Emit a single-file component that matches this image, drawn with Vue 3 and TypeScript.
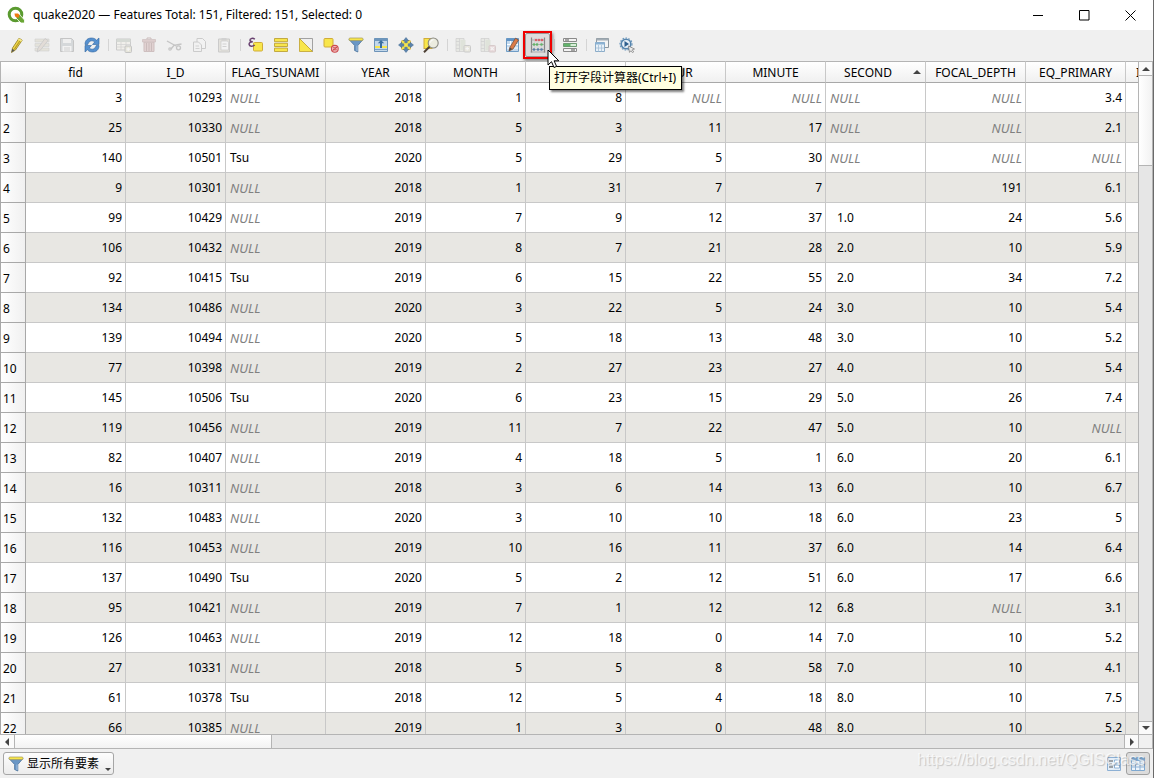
<script setup lang="ts">
interface Tool {
  label: string
  icon: string
  disabled?: boolean
  active?: boolean
}

const pencil =
  '<path d="M2.500 15.500l1-4.500L10 1.200l3.200 2L6.500 13z" fill="#f0d94a" stroke="#8d7a25" stroke-width=".8"/><path d="M5.200 12.500L11.800 2.500" stroke="#b79a26" stroke-width="1.200"/><path d="M2.500 15.500l.8-3.700 2.300 1.500z" fill="#555"/><path d="M10 1.200l3.200 2-1 1.600-3.200-2z" fill="#f6e98e"/>'
const funnel =
  '<path d="M1 2.500h14L9.800 8.500v6.500l-3.200-1.500v-5z" fill="#6a97c6" stroke="#4b739c" stroke-width=".8"/><path d="M9 8.500v5.500" stroke="#a5c3e3"/><rect x="1" y="1" width="14" height="2.600" rx="1" fill="#f8e64b" stroke="#a39a5a" stroke-width=".7"/>'
const column =
  '<path d="M1 1.500h8v13H1z" fill="#d8dccf" stroke="#999" stroke-width=".8"/><path d="M4.500 1.500v13M1 4.500h3.500M1 8h3.500M1 11.500h3.500" stroke="#999" stroke-width=".8"/><rect x="5.500" y="3" width="5" height="10" fill="#c2ccb4"/>'

const groups: Tool[][] = [
  [
    { label: 'Toggle editing', icon: pencil },
    {
      label: 'Multi edit',
      disabled: true,
      icon: '<path d="M1 2h14v3H1zM1 6.500h14v3H1zM1 11h14v3H1z" fill="#cfcbb4" stroke="#999" stroke-width=".6"/><path d="M3 15l1-4 7-9.500 3 2L6.500 13z" fill="#c9b9a9" stroke="#888" stroke-width=".9"/>',
    },
    {
      label: 'Save edits',
      disabled: true,
      icon: '<path d="M1.500 1.500h11l2 2v11h-13z" fill="#a6acb2" stroke="#777"/><path d="M4 2h8v4H4z" fill="#eee"/><path d="M3.500 9h9v5.500h-9z" fill="#f7f7f7"/><path d="M5 11h6M5 13h6" stroke="#999"/>',
    },
    {
      label: 'Reload table',
      icon: '<path d="M1 7.500C1 3 4 1 7.500 1c2.300 0 3.800.8 5 2.200L15 1v6.500H8.500L10.700 5C8.500 3 5 3.300 3.800 7.500z" fill="#5590cf" stroke="#2f659f" stroke-width=".6"/><path d="M15 8.500C15 13 12 15 8.500 15c-2.300 0-3.800-.8-5-2.200L1 15V8.500h6.500L5.300 11c2.200 2 5.700 1.700 6.900-2.500z" fill="#5590cf" stroke="#2f659f" stroke-width=".6"/>',
    },
  ],
  [
    {
      label: 'Add feature',
      disabled: true,
      icon: '<path d="M.5 2h14v11H.5z" fill="#f1efe2" stroke="#888"/><path d="M.5 2h14v3H.5z" fill="#a7b3a6"/><path d="M.5 7.500h14M.5 10h14M5 5v8M10 5v8" stroke="#999" stroke-width=".7"/><rect x="9" y="9" width="6.500" height="6.500" rx="1" fill="#d6d2b4" stroke="#777"/><path d="M12.200 10.500v3.500M10.500 12.200H14" stroke="#fff" stroke-width="1.300"/>',
    },
    {
      label: 'Delete selected features',
      disabled: true,
      icon: '<path d="M3 5h10v9.500H3z" fill="#c89b9b" stroke="#906767"/><path d="M1.500 2.500h13V5h-13z" fill="#bd9292" stroke="#906767" stroke-width=".7"/><path d="M6 2V1h4v1M5.500 6v8M8 6v8M10.500 6v8" stroke="#875d5d" fill="none"/>',
    },
    {
      label: 'Cut',
      disabled: true,
      icon: '<path d="M1 4l9 5M15.500 7L8 8.300 5 12" stroke="#777" stroke-width="1.400" fill="none"/><circle cx="12.500" cy="10.800" r="2" fill="none" stroke="#777" stroke-width="1.300"/><circle cx="4" cy="12" r="1.200" fill="none" stroke="#777" stroke-width="1.200"/>',
    },
    {
      label: 'Copy',
      disabled: true,
      icon: '<path d="M6 1.500h5.500l3 3v7H6z" fill="#f8f8f8" stroke="#888"/><path d="M2.500 5h5l3 3v6.500h-8z" fill="#f4f4f4" stroke="#888"/><path d="M4.500 9h3.500M4.500 11.500h4" stroke="#999"/>',
    },
    {
      label: 'Paste',
      disabled: true,
      icon: '<path d="M2.500 2h11v13h-11z" fill="#cfcaba" stroke="#888"/><path d="M5 4h6.500l1 1.500V13H5z" fill="#fafafa" stroke="#888" stroke-width=".7"/><path d="M5.500 1h5v2.500h-5z" fill="#999"/><path d="M6.500 7h4M6.500 9.500h4" stroke="#999"/>',
    },
  ],
  [
    {
      label: 'Select by expression',
      icon: '<rect x="5.500" y="5.500" width="9" height="8.500" rx="1" fill="#f8e64b" stroke="#d0ac3a"/><path d="M6.800 2.300C5 .6 1.800 1.300 2 3.200c.1 1.200 1.400 1.600 2.800 1.600C2.800 4.800.9 5.600 1.100 7.400c.2 2.100 3.600 2.400 5.600.6" fill="none" stroke="#68406f" stroke-width="1.500"/>',
    },
    {
      label: 'Select all',
      icon: '<path d="M1.500 1.500h13v3.200h-13zM1.500 6.300h13v3.200h-13zM1.500 11.100h13v3.400h-13z" fill="#f8e64b" stroke="#bda337" stroke-width=".9"/>',
    },
    {
      label: 'Invert selection',
      icon: '<path d="M1.500 1.500h13v13z" fill="#efefef" stroke="#999" stroke-width=".9"/><path d="M1.500 1.500v13h13z" fill="#f8e64b" stroke="#c5a93a" stroke-width=".9"/>',
    },
    {
      label: 'Deselect all',
      icon: '<rect x="1" y="1.500" width="9" height="8.500" rx="1" fill="#f8e64b" stroke="#d0ac3a"/><circle cx="11.800" cy="11.800" r="3.400" fill="#f3c3c3" stroke="#cc4b4f" stroke-width="1.100"/><path d="M9.500 13.500l4.600-3.400M9.800 10.800h4M9.800 12.800h4" stroke="#cc4b4f"/>',
    },
    { label: 'Filter', icon: funnel },
    {
      label: 'Move selection to top',
      icon: '<path d="M1.500 1.500h13v13h-13z" fill="#c3d8ea" stroke="#6d93b8"/><path d="M1.500 1.500h13v2.500h-13z" fill="#6d96bd"/><path d="M2 9h12v2H2z" fill="#f8e64b"/><path d="M2 12.500h12" stroke="#7ea3c6"/><path d="M8 3l3.200 3.200H9V11H7V6.200H4.800z" fill="#3a6e9e"/>',
    },
    {
      label: 'Pan to selection',
      icon: '<rect x="3.500" y="3.500" width="9" height="9" rx="1" fill="#f8e64b" stroke="#d0ac3a"/><path d="M8 .5l2.700 3.300H9.200v2H6.800v-2H5.300zM8 15.500l2.700-3.300H9.200v-2H6.800v2H5.300zM.5 8l3.300-2.700v1.500h2v2.400h-2v1.500zM15.500 8l-3.300-2.700v1.500h-2v2.400h2v1.500z" fill="#5b83ad" stroke="#426a93" stroke-width=".5"/>',
    },
    {
      label: 'Zoom to selection',
      icon: '<rect x="1" y="1.500" width="8" height="10" fill="#f8e64b" stroke="#d0ac3a"/><circle cx="10.200" cy="6" r="5" fill="#ececdf" stroke="#8a8a82" stroke-width="1.100"/><path d="M6.500 9.800L1 15.200" stroke="#4d3f33" stroke-width="2"/><path d="M7.500 5.500a3 3 0 0 1 3-2.800" stroke="#fff" fill="none"/>',
    },
  ],
  [
    {
      label: 'New field',
      disabled: true,
      icon: column + '<rect x="9" y="8.500" width="6.500" height="6.500" rx="1" fill="#d8d5bb" stroke="#888"/><path d="M12.200 10v3.500M10.500 11.700H14" stroke="#fff" stroke-width="1.200"/>',
    },
    {
      label: 'Delete field',
      disabled: true,
      icon: column + '<rect x="9" y="8.500" width="6.500" height="6.500" rx="1" fill="#d9b1b5" stroke="#a88"/><path d="M10.700 10.200l3 3M13.700 10.200l-3 3" stroke="#fff" stroke-width="1.200"/>',
    },
    {
      label: 'Organize columns',
      icon: '<path d="M1.500 1.500h12v13h-12z" fill="#c5daee" stroke="#6f9cc5"/><path d="M1.500 1.500h12v2.500h-12z" fill="#6294c5"/><path d="M2 7.500h11M2 11h11M5.500 4v10" stroke="#fff"/><path d="M4 14l1-4 5.500-8.800 3 1.800L8 12z" fill="#dc7b48" stroke="#73503d" stroke-width=".8"/><path d="M4 14l.9-3.500L7.300 12z" fill="#4c4c4c"/>',
    },
    {
      label: '打开字段计算器',
      active: true,
      icon: '<path d="M1.500.5v15M14.500.5v15" stroke="#888" stroke-width="1.200"/><path d="M1.500 3h13M1.500 7.500h13M1.500 12.500h13M.5 15h15" stroke="#999" stroke-width=".7"/><path d="M4.500 1v13M8 1v13M11.500 1v13" stroke="#ccc" stroke-width=".6"/><g fill="#d9616b"><circle cx="6" cy="3" r="1.300"/><circle cx="9" cy="3" r="1.300"/><circle cx="12" cy="3" r="1.300"/></g><g fill="#64b36a"><circle cx="4" cy="7.500" r="1.300"/><circle cx="7" cy="7.500" r="1.300"/><circle cx="11.500" cy="7.500" r="1.300"/></g><g fill="#597ea8"><circle cx="4" cy="12.500" r="1.300"/><circle cx="8" cy="12.500" r="1.300"/><circle cx="11.500" cy="12.500" r="1.300"/></g>',
    },
  ],
  [
    {
      label: 'Conditional formatting',
      icon: '<path d="M1.500 1.500h13v3h-13z" fill="#f4f4f4" stroke="#8a8a8a"/><path d="M1.500 6.500h13v3h-13z" fill="#62b36b" stroke="#6d9a72"/><path d="M1.500 11.500h13v3h-13z" fill="#f4f4f4" stroke="#8a8a8a"/><path d="M8.500 7h5.500v2H8.500z" fill="#d8efd9"/><path d="M3 3h4M9 13h4" stroke="#555"/>',
    },
  ],
  [
    {
      label: 'Dock attribute table',
      icon: '<path d="M2.500 1.500h12v9h-12z" fill="#f4f4f4" stroke="#8c979f"/><path d="M2.500 1.500h12v2h-12z" fill="#a3adb5"/><path d="M1.500 5.500h9v9h-9z" fill="#e8f1f8" stroke="#8bacc8"/><path d="M1.500 5.500h9v2h-9z" fill="#8bb2d4"/><path d="M2 11h8M4.500 8v6.500M7.500 8v6.500" stroke="#a5bfd5" stroke-width=".8"/>',
    },
    {
      label: 'Actions',
      icon: '<circle cx="7" cy="7" r="4.800" fill="#e4eef7" stroke="#5685ae" stroke-width="1.600"/><circle cx="7" cy="7" r="6" fill="none" stroke="#6d98bd" stroke-width="1.200" stroke-dasharray="1.600 1.400"/><path d="M5.500 4l4.500 3-4.500 3z" fill="#2e5e8d"/><path d="M9.500 9l6 3-2.300.8 1.500 2-1.200.9-1.500-2-1.500 1.700z" fill="#eee" stroke="#777" stroke-width=".7"/>',
    },
  ],
]

const columns = ['fid', 'I_D', 'FLAG_TSUNAMI', 'YEAR', 'MONTH', 'DAY', 'HOUR', 'MINUTE', 'SECOND', 'FOCAL_DEPTH', 'EQ_PRIMARY', 'I']

const source = `3|10293|NULL|2018|1|8|NULL|NULL|NULL|NULL|3.4
25|10330|NULL|2018|5|3|11|17|NULL|NULL|2.1
140|10501|Tsu|2020|5|29|5|30|NULL|NULL|NULL
9|10301|NULL|2018|1|31|7|7||191|6.1
99|10429|NULL|2019|7|9|12|37|1.0|24|5.6
106|10432|NULL|2019|8|7|21|28|2.0|10|5.9
92|10415|Tsu|2019|6|15|22|55|2.0|34|7.2
134|10486|NULL|2020|3|22|5|24|3.0|10|5.4
139|10494|NULL|2020|5|18|13|48|3.0|10|5.2
77|10398|NULL|2019|2|27|23|27|4.0|10|5.4
145|10506|Tsu|2020|6|23|15|29|5.0|26|7.4
119|10456|NULL|2019|11|7|22|47|5.0|10|NULL
82|10407|NULL|2019|4|18|5|1|6.0|20|6.1
16|10311|NULL|2018|3|6|14|13|6.0|10|6.7
132|10483|NULL|2020|3|10|10|18|6.0|23|5
116|10453|NULL|2019|10|16|11|37|6.0|14|6.4
137|10490|Tsu|2020|5|2|12|51|6.0|17|6.6
95|10421|NULL|2019|7|1|12|12|6.8|NULL|3.1
126|10463|NULL|2019|12|18|0|14|7.0|10|5.2
27|10331|NULL|2018|5|5|8|58|7.0|10|4.1
61|10378|Tsu|2018|12|5|4|18|8.0|10|7.5
66|10385|NULL|2019|1|3|0|48|8.0|10|5.2`
const rows: string[][] = source.split('\n').map((line) => [...line.split('|'), ''])

function cellClass(value: string, index: number) {
  return {
    empty: value === 'NULL',
    left: index === 2 || index === 8,
    padded: index === 8 && value !== 'NULL',
  }
}
</script>

<template>
  <div class="window">
    <header class="titlebar">
      <svg class="logo" viewBox="0 0 18 18" aria-hidden="true">
        <circle cx="8.500" cy="8.500" r="6.300" fill="none" stroke="#5a9a2f" stroke-width="3" />
        <path d="M9 8.500h3.500l5 5.500v3h-3.500L9 12z" fill="#6aa635" stroke="#fff" stroke-width=".8" />
        <path d="M7.500 7.500h3.500l1.500 1.500-1 3-3.500-1.500z" fill="#ee7913" />
      </svg>
      <h1>quake2020 — Features Total: 151, Filtered: 151, Selected: 0</h1>
      <div class="controls">
        <button aria-label="Minimize"><svg viewBox="0 0 11 11"><path d="M0 5.500h10" /></svg></button>
        <button aria-label="Maximize"><svg viewBox="0 0 11 11"><path d="M.5.5h9.500v9.500H.5z" /></svg></button>
        <button aria-label="Close"><svg viewBox="0 0 11 11"><path d="M.5.5l10 10M10.500.5l-10 10" /></svg></button>
      </div>
    </header>

    <nav class="toolbar">
      <div v-for="(group, g) in groups" :key="g" class="group">
        <div v-for="tool in group" :key="tool.label" class="slot">
          <button :aria-label="tool.label" :disabled="tool.disabled" :class="{ active: tool.active }">
            <svg viewBox="0 0 16 16" v-html="tool.icon"></svg>
          </button>
          <template v-if="tool.active">
            <span class="highlight"></span>
            <div class="tooltip" role="tooltip">打开字段计算器(Ctrl+I)</div>
            <svg class="cursor" viewBox="0 0 13 20" aria-hidden="true">
              <path d="M1 1v15l3.500-3.300 2.500 5.800 2.600-1.100-2.500-5.600h4.700z" fill="#fff" stroke="#000" />
            </svg>
          </template>
        </div>
      </div>
    </nav>

    <main class="grid">
      <div class="viewport">
        <table>
          <colgroup>
            <col class="index" />
            <col v-for="name in columns" :key="name" class="field" />
          </colgroup>
          <thead>
            <tr>
              <td class="corner"></td>
              <th v-for="name in columns" :key="name" scope="col" :class="{ sorted: name === 'SECOND' }">{{ name }}</th>
            </tr>
          </thead>
          <tbody>
            <tr v-for="(row, r) in rows" :key="r">
              <th scope="row">{{ r + 1 }}</th>
              <td v-for="(value, c) in row" :key="c" :class="cellClass(value, c)">{{ value }}</td>
            </tr>
          </tbody>
        </table>
      </div>
      <div class="vscroll">
        <button class="up" aria-label="Scroll up"></button>
        <div class="thumb"></div>
        <div class="track"></div>
        <button class="down" aria-label="Scroll down"></button>
      </div>
      <div class="hscroll">
        <button class="prev" aria-label="Scroll left"></button>
        <div class="thumb"></div>
        <div class="track"></div>
        <button class="next" aria-label="Scroll right"></button>
      </div>
      <div class="resize"></div>
    </main>

    <footer class="statusbar">
      <button class="filter">
        <svg viewBox="0 0 16 16" aria-hidden="true" v-html="funnel"></svg>
        <span>显示所有要素</span>
        <i class="caret"></i>
      </button>
      <div class="views">
        <button aria-label="Form view">
          <svg viewBox="0 0 16 16">
            <path d="M1.500 1.500h13v13h-13z" fill="#e4eef8" stroke="#8db0d4" />
            <path d="M3 5h4M3 8h3M3 11h4" stroke="#555" stroke-width="1.200" />
            <path d="M8.500 4h5v3h-5zM8.500 9h5v3h-5z" fill="#fff" stroke="#8db0d4" />
          </svg>
        </button>
        <button class="pressed" aria-label="Table view">
          <svg viewBox="0 0 16 16">
            <path d="M1.500 1.500h13v13h-13z" fill="#edf4fb" stroke="#7ea8d0" />
            <path d="M1.500 1.500h13v3.500h-13z" fill="#7ea8d0" />
            <path d="M1.500 8h13M1.500 11h13M5.500 5v9M10 5v9" stroke="#8db0d4" />
          </svg>
        </button>
      </div>
      <span class="watermark">https://blog.csdn.net/QGISClass</span>
    </footer>
  </div>
</template>

<style>
html,
body {
  background: #f0f0f0;
}
</style>

<style scoped>
.window {
  display: flex;
  flex-direction: column;
  height: 100vh;
  box-sizing: border-box;
  border-right: 1px solid #6a6a6a;
  overflow: hidden;
  background: #f0f0f0;
  color: #000;
  font: 12px/16px "Noto Sans", "Noto Sans CJK SC", sans-serif;
}
button {
  box-sizing: border-box;
  margin: 0;
  padding: 0;
  border: 0;
  background: none;
  font: inherit;
  color: inherit;
}
svg {
  display: block;
}
.titlebar {
  display: flex;
  align-items: center;
  flex: none;
  height: 30px;
  padding-left: 7px;
  background: #fff;
}
.logo {
  width: 18px;
  height: 18px;
}
h1 {
  flex: 1;
  margin: 0 0 0 8px;
  font-size: 12px;
  font-weight: 400;
  white-space: nowrap;
}
.controls {
  display: flex;
}
.controls button {
  display: grid;
  place-items: center;
  width: 46px;
  height: 29px;
}
.controls svg {
  width: 11px;
  height: 11px;
  fill: none;
  stroke: #000;
}
.toolbar {
  display: flex;
  align-items: flex-start;
  flex: none;
  box-sizing: border-box;
  height: 31px;
  padding: 3px 0 0 4px;
}
.group {
  display: flex;
}
.group + .group::before {
  content: "";
  width: 1px;
  height: 12px;
  margin: 6px 2px 6px 4px;
  background: #d4d4d4;
}
.slot {
  position: relative;
}
.slot button {
  display: grid;
  place-items: center;
  width: 25px;
  height: 24px;
}
.slot svg {
  width: 16px;
  height: 16px;
}
.slot button:disabled svg {
  opacity: 0.35;
}
.slot button.active {
  border: 1px solid #999;
  border-radius: 2px;
  background: #ddd;
}
.highlight {
  position: absolute;
  inset: -2px;
  border: 2px solid #f00000;
  box-shadow: 1px 2px 3px rgba(0, 0, 0, 0.45);
}
.tooltip {
  position: absolute;
  z-index: 2;
  top: 33px;
  left: 24px;
  padding: 3px 5px 3px 4px;
  border: 1px solid #000;
  background: #ffffe1;
  box-shadow: 2px 2px 2px rgba(0, 0, 0, 0.5);
  white-space: nowrap;
}
.slot .cursor {
  position: absolute;
  z-index: 3;
  top: 16px;
  left: 22px;
  width: 13px;
  height: 20px;
}
.grid {
  display: grid;
  grid-template: minmax(0, 1fr) 14px / minmax(0, 1fr) 15px;
  flex: 1;
  min-height: 0;
  border-bottom: 1px solid #b4b4b4;
}
.viewport {
  overflow: hidden;
  background: #fff;
}
table {
  width: 1226px;
  table-layout: fixed;
  border-collapse: separate;
  border-spacing: 0;
}
.index {
  width: 26px;
}
.field {
  width: 100px;
}
th,
td {
  box-sizing: border-box;
  padding: 0 3px 0 4px;
  border-right: 1px solid #c8c8c8;
  border-bottom: 1px solid #c8c8c8;
  font-weight: 400;
  white-space: nowrap;
}
thead th,
.corner {
  position: relative;
  height: 22px;
  padding: 2px 0 0;
  border-top: 1px solid #b4b4b4;
  border-bottom-color: #a8a8a8;
  background: linear-gradient(#fff, #f0f0f0);
  text-align: center;
}
thead .corner {
  border-right: 0;
  border-left: 1px solid #b4b4b4;
}
thead th:last-child {
  padding: 2px 0 0 10px;
  text-align: left;
}
thead th.sorted {
  padding-right: 15px;
}
.sorted::after {
  content: "";
  position: absolute;
  top: 8px;
  right: 4px;
  border: 4px solid transparent;
  border-top: 0;
  border-bottom-color: #444;
}
tbody td,
tbody th {
  height: 30px;
}
tbody th {
  padding: 2px 0 0 2px;
  border-left: 1px solid #b4b4b4;
  border-color: #a8a8a8;
  background: linear-gradient(90deg, #fff, #f0f0f0);
  text-align: left;
}
tbody td {
  text-align: right;
}
tbody tr:nth-child(even) td {
  background: #e8e7e3;
}
tbody td.left {
  text-align: left;
}
tbody td.padded {
  padding-left: 11px;
}
td.empty {
  color: #808080;
  font-size: 13px;
  font-style: italic;
}
.vscroll,
.hscroll {
  display: flex;
  background: #e6e6e6;
}
.vscroll {
  flex-direction: column;
  border: solid #b4b4b4;
  border-width: 1px 1px 0;
}
.hscroll {
  border-top: 1px solid #b4b4b4;
}
.vscroll button,
.hscroll button {
  display: grid;
  place-items: center;
  flex: none;
  width: 13px;
  height: 13px;
  background: #fafafa;
}
.hscroll button {
  width: 14px;
}
.vscroll button::before,
.hscroll button::before {
  content: "";
  border: 4px solid transparent;
}
.vscroll .up::before {
  border-top: 0;
  border-bottom-color: #444;
}
.vscroll .down::before {
  border-bottom: 0;
  border-top-color: #444;
}
.hscroll .prev::before {
  border-left: 0;
  border-right-color: #444;
}
.hscroll .next::before {
  border-right: 0;
  border-left-color: #444;
}
.vscroll .thumb {
  flex: 0 0 91px;
  box-sizing: border-box;
  border: solid #b4b4b4;
  border-width: 1px 0;
  background: linear-gradient(90deg, #fff, #f2f2f2);
}
.hscroll .thumb {
  flex: 0 0 258px;
  box-sizing: border-box;
  border: solid #b4b4b4;
  border-width: 0 1px;
  background: linear-gradient(#fff, #f2f2f2);
}
.track {
  flex: 1;
}
.vscroll .down {
  border-top: 1px solid #b4b4b4;
}
.hscroll .next {
  border-left: 1px solid #b4b4b4;
}
.resize {
  border: solid #b4b4b4;
  border-width: 1px 1px 0;
}
.statusbar {
  position: relative;
  display: flex;
  align-items: center;
  justify-content: space-between;
  flex: none;
  height: 29px;
  padding: 0 3px;
}
.filter {
  position: relative;
  display: flex;
  align-items: center;
  gap: 3px;
  height: 23px;
  padding: 0 14px 0 4px;
  border: 1px solid #a6a6a6;
  border-radius: 3px;
  background: linear-gradient(#fdfdfd, #ececec);
}
.filter svg,
.views svg {
  width: 16px;
  height: 16px;
}
.caret {
  position: absolute;
  right: 2px;
  bottom: 3px;
  border: 3px solid transparent;
  border-top-color: #444;
  border-bottom: 0;
}
.views {
  display: flex;
}
.views button {
  display: grid;
  place-items: center;
  width: 24px;
  height: 23px;
}
.views .pressed {
  border: 1px solid #a0a0a0;
  border-radius: 3px;
  background: #dcdcdc;
}
.watermark {
  position: absolute;
  right: 8px;
  bottom: 8px;
  color: rgba(255, 255, 255, 0.7);
  font: 16px/20px "Liberation Sans", Arial, sans-serif;
  text-shadow: 1px 1px 1px rgba(0, 0, 0, 0.18);
  pointer-events: none;
}
</style>
